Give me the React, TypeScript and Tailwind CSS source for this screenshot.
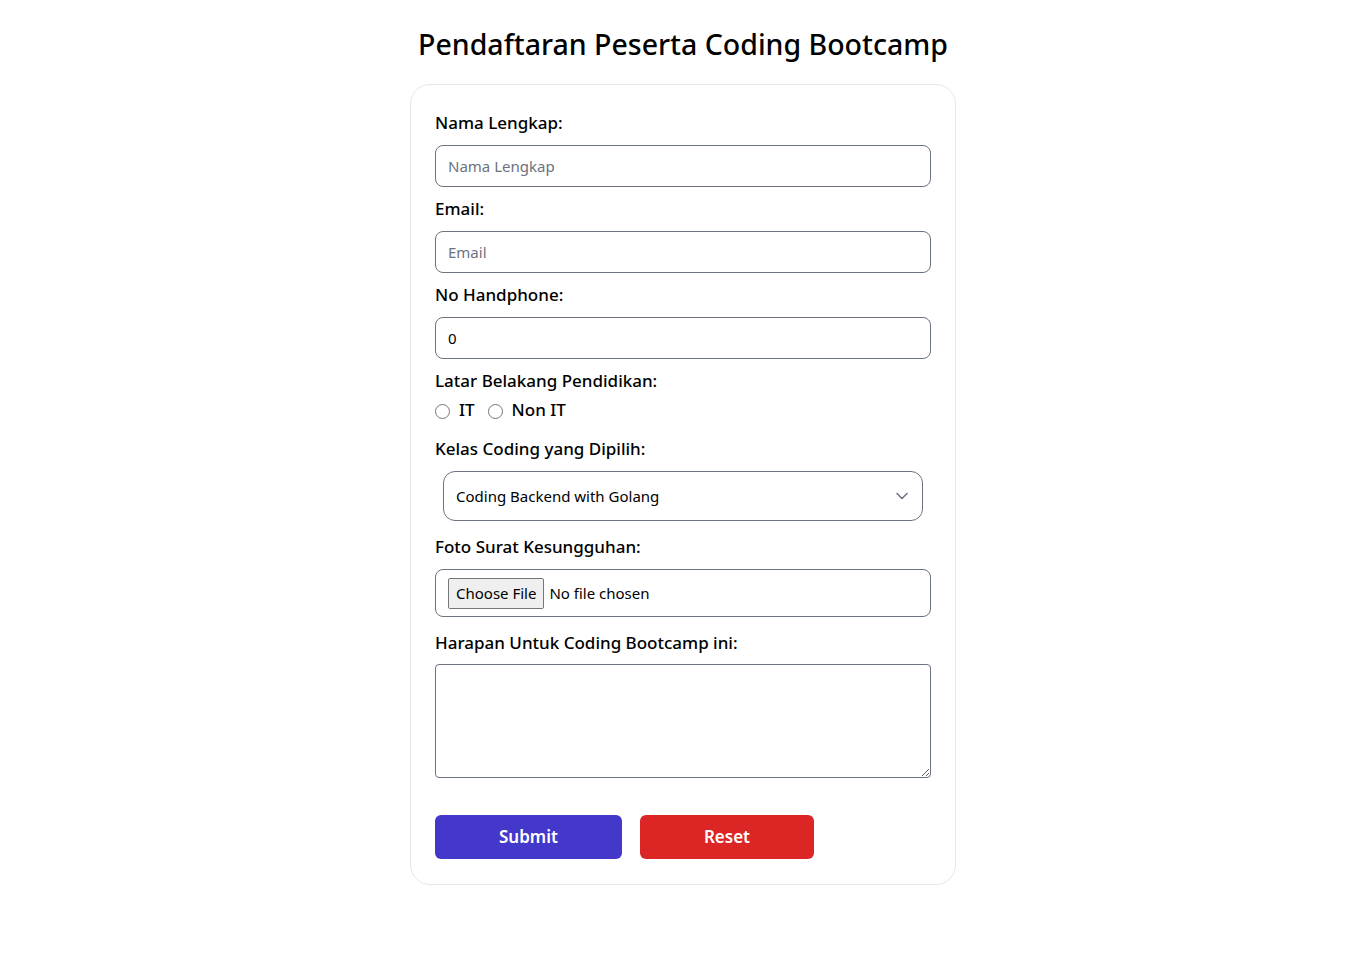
import React from "react";

const labelCls = "block text-[17px] leading-7 font-medium";
const inputCls =
  "h-[42px] w-full border border-[#6b7280] rounded-lg px-3 text-[15px] placeholder:text-[#6b7280] outline-none";
const radioCls =
  "appearance-none shrink-0 w-[15px] h-[15px] m-0 mt-[3px] rounded-full border border-[#767676] bg-white checked:border-[4px] checked:border-[#2563eb]";

export default function App() {
  return (
    <div
      className="min-h-screen bg-white flex flex-col items-center pt-[26px] text-black"
      style={{ fontFamily: '"Noto Sans", "Open Sans", sans-serif' }}
    >
      <h1 className="text-[28.5px] leading-9 font-medium mb-[22px]">
        Pendaftaran Peserta Coding Bootcamp
      </h1>
      <form
        className="w-[546px] border border-[#e5e7eb] rounded-[20px] px-6 pt-[24px] pb-[25px] flex flex-col"
        onSubmit={(e) => e.preventDefault()}
      >
        <label className={labelCls}>Nama Lengkap:</label>
        <input type="text" placeholder="Nama Lengkap" className={"mt-[8px] " + inputCls} />
        <label className={"mt-[8px] " + labelCls}>Email:</label>
        <input type="email" placeholder="Email" className={"mt-[8px] " + inputCls} />
        <label className={"mt-[8px] " + labelCls}>No Handphone:</label>
        <input type="number" defaultValue={0} className={"mt-[8px] " + inputCls} />
        <label className={"mt-[8px] " + labelCls}>Latar Belakang Pendidikan:</label>
        <div className="mt-[1px] h-7 flex items-center text-[17px] font-medium">
          <input type="radio" name="latar" className={radioCls + " mr-[9px]"} />
          <span>IT</span>
          <input type="radio" name="latar" className={radioCls + " ml-[13px] mr-[9px]"} />
          <span>Non IT</span>
        </div>
        <label className={"mt-[11px] " + labelCls}>Kelas Coding yang Dipilih:</label>
        <div className="relative mt-[8px] mx-2">
          <select
            defaultValue="golang"
            className="appearance-none h-[50px] w-full border border-[#6b7280] rounded-xl pl-3 pr-10 text-[15px] bg-white outline-none"
          >
            <option value="golang">Coding Backend with Golang</option>
            <option value="react">Coding Frontend with ReactJS</option>
            <option value="fullstack">Fullstack Developer</option>
          </select>
          <svg
            className="pointer-events-none absolute right-[15px] top-1/2 -translate-y-1/2"
            width="12"
            height="7"
            viewBox="0 0 12 7"
            fill="none"
          >
            <path
              d="M1 1l5 5 5-5"
              stroke="#6b7280"
              strokeWidth="1.5"
              strokeLinecap="round"
              strokeLinejoin="round"
            />
          </svg>
        </div>
        <label className={"mt-[12px] " + labelCls}>Foto Surat Kesungguhan:</label>
        <input
          type="file"
          className="mt-[8px] h-[48px] w-full border border-[#6b7280] rounded-lg px-3 py-[8px] text-[15px] file:border file:border-[#767676] file:bg-[#efefef] file:rounded-[2px] file:px-[7px] file:py-[3px] file:mr-[5px]"
        />
        <label className={"mt-[12px] " + labelCls}>Harapan Untuk Coding Bootcamp ini:</label>
        <textarea className="mt-[7px] h-[114px] w-full border border-[#6b7280] rounded px-3 py-2 text-[15px] outline-none" />
        <div className="mt-[37px] flex gap-[18px]">
          <button
            type="submit"
            className="h-[44px] px-16 rounded-md bg-[#4338ca] text-white text-[17px] font-semibold"
          >
            Submit
          </button>
          <button
            type="reset"
            className="h-[44px] px-16 rounded-md bg-[#dc2626] text-white text-[17px] font-semibold"
          >
            Reset
          </button>
        </div>
      </form>
    </div>
  );
}
